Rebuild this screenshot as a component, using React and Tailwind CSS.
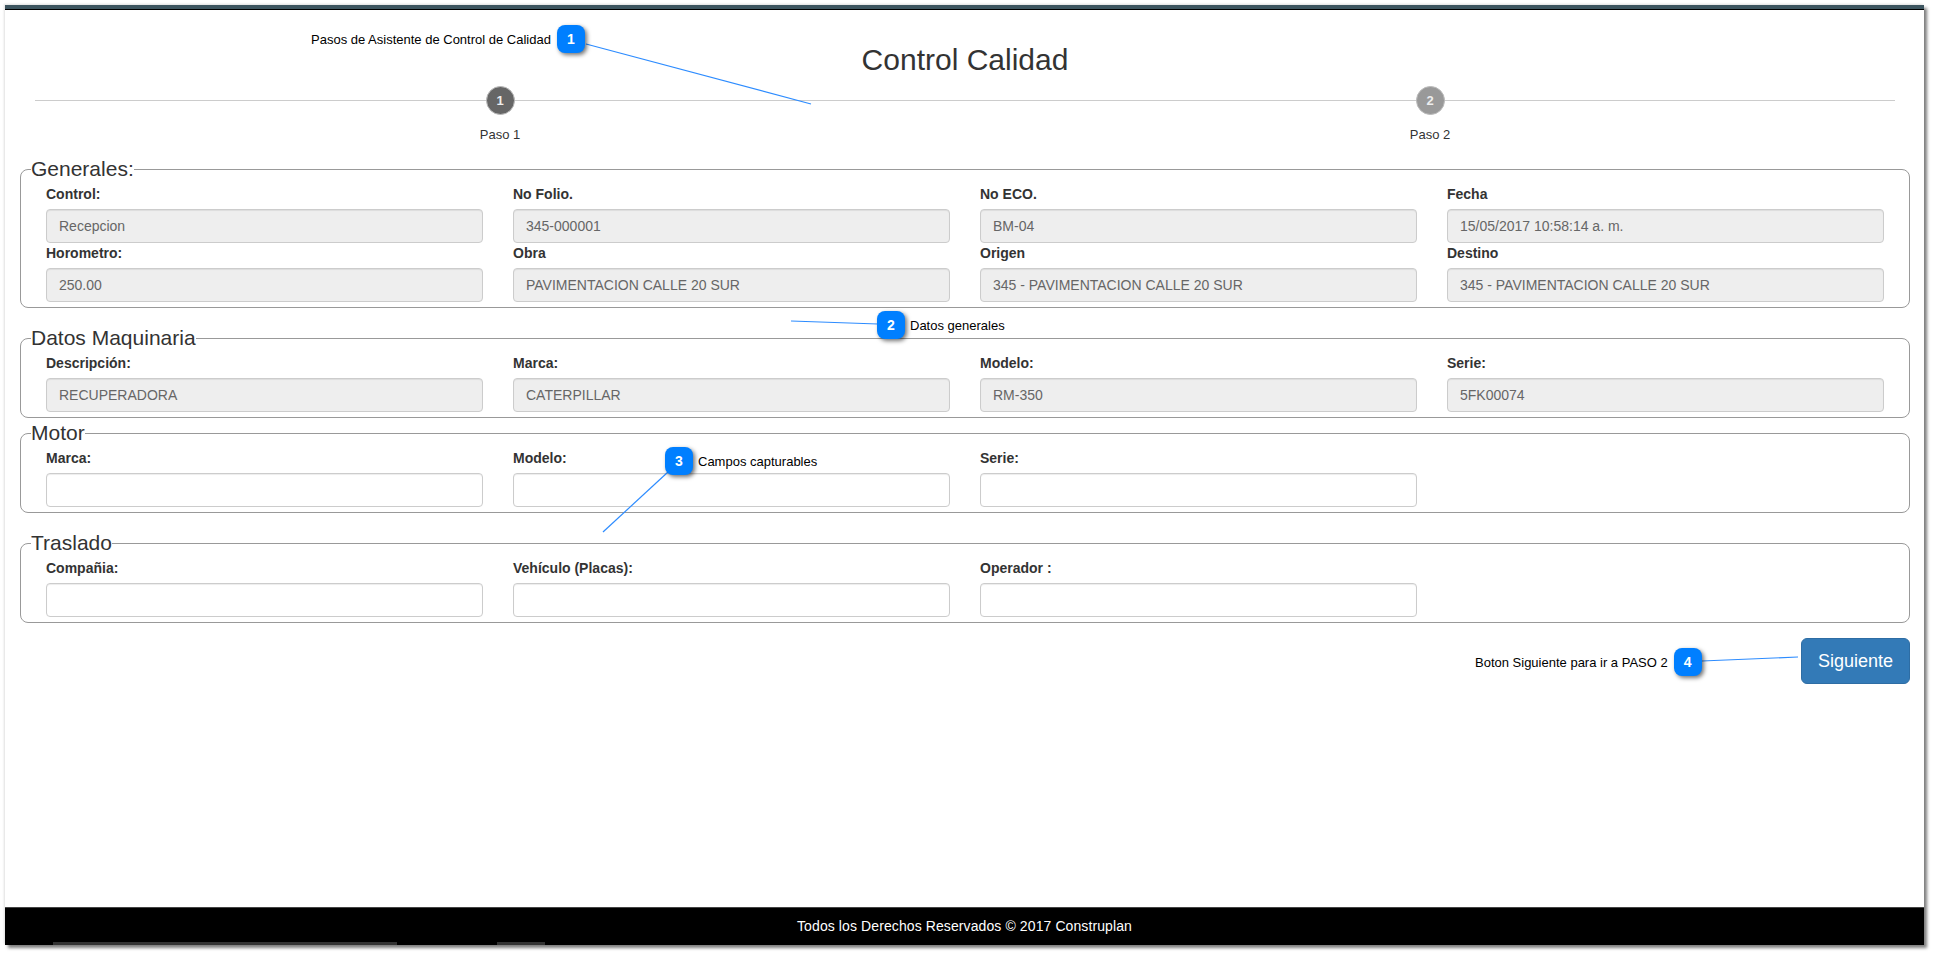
import React from "react";

const font = "font-['Liberation_Sans',Arial,sans-serif]";

// Datos de cada bloque del formulario
const sections = [
  {
    title: "Generales:",
    fields: [
      { label: "Control:", value: "Recepcion" },
      { label: "No Folio.", value: "345-000001" },
      { label: "No ECO.", value: "BM-04" },
      { label: "Fecha", value: "15/05/2017 10:58:14 a. m." },
      { label: "Horometro:", value: "250.00" },
      { label: "Obra", value: "PAVIMENTACION CALLE 20 SUR" },
      { label: "Origen", value: "345 - PAVIMENTACION CALLE 20 SUR" },
      { label: "Destino", value: "345 - PAVIMENTACION CALLE 20 SUR" },
    ],
  },
  {
    title: "Datos Maquinaria",
    className: "mt-[15px]",
    fields: [
      { label: "Descripción:", value: "RECUPERADORA" },
      { label: "Marca:", value: "CATERPILLAR" },
      { label: "Modelo:", value: "RM-350" },
      { label: "Serie:", value: "5FK00074" },
    ],
  },
  {
    title: "Motor",
    fields: [{ label: "Marca:" }, { label: "Modelo:" }, { label: "Serie:" }],
  },
  {
    title: "Traslado",
    className: "mt-[15px]",
    fields: [{ label: "Compañia:" }, { label: "Vehículo (Placas):" }, { label: "Operador :" }],
  },
];

function Field({ label, value }) {
  return (
    <div className="px-[15px]">
      <label className="block h-5 mb-[5px] text-[14px] leading-5 font-bold text-[#333]">{label}</label>
      {value ? (
        <div className="h-[34px] px-3 rounded border border-[#ccc] bg-[#eee] text-[14px] leading-[32px] text-[#666] shadow-[inset_0_1px_1px_rgba(0,0,0,0.075)]">
          {value}
        </div>
      ) : (
        <input
          type="text"
          className="block w-full h-[34px] px-3 rounded border border-[#ccc] bg-white text-[14px] text-[#555] shadow-[inset_0_1px_1px_rgba(0,0,0,0.075)]"
        />
      )}
    </div>
  );
}

function Section({ title, fields, className = "" }) {
  return (
    <fieldset className={`border border-[#999] rounded-lg px-[10px] pb-[5px] ${className}`}>
      <legend className="text-[21px] leading-[30px] text-[#333]">{title}</legend>
      <div className="grid grid-cols-4">
        {fields.map((f, i) => (
          <Field key={i} {...f} />
        ))}
      </div>
    </fieldset>
  );
}

function Step({ n, label, active }) {
  return (
    <div className="flex flex-col items-center">
      <div
        className={`relative w-[29px] h-[29px] rounded-full border border-[#bbb] flex items-center justify-center text-[13px] font-bold text-[#eee] ${
          active ? "bg-[#666]" : "bg-[#999]"
        }`}
      >
        {n}
      </div>
      <div className="mt-[11px] text-[13px] leading-[17px] text-[#333]">{label}</div>
    </div>
  );
}

// Anotacion azul: numero y texto en una sola fila
function Callout({ n, text, textFirst, className }) {
  const note = <span className="pt-[2px] text-[13px] leading-4 text-black whitespace-nowrap">{text}</span>;
  return (
    <div className={`absolute flex items-center ${textFirst ? "gap-[6px]" : "gap-[5px]"} ${className}`}>
      {textFirst && note}
      <div className="w-7 h-7 rounded-lg bg-[#007fff] text-white text-[14px] font-bold flex items-center justify-center shadow-[2px_2px_4px_rgba(0,0,0,0.55)]">
        {n}
      </div>
      {!textFirst && note}
    </div>
  );
}

export default function App() {
  return (
    <div className={`relative w-[1933px] h-[954px] overflow-hidden bg-white pl-[5px] pt-[5px] ${font}`}>
      <div className="w-[1919px] h-[940px] flex flex-col bg-white shadow-[3px_3px_3px_rgba(0,0,0,0.5),-1px_-1px_2px_rgba(0,0,0,0.12)]">
        <div className="h-[5px] shrink-0 bg-[#3d5560] border-b border-black" />

        <main className="flex-1 pl-[15px] pr-[14px]">
          <h1 className="mt-[33px] text-center text-[30px] leading-[33px] text-[#333]">Control Calidad</h1>

          <div className="relative mt-[10px] ml-[15px] mr-[15px] grid grid-cols-2">
            <div className="absolute left-0 right-0 top-[14px] h-px bg-[#ccc]" />
            <Step n={1} label="Paso 1" active />
            <Step n={2} label="Paso 2" />
          </div>

          <div className="mt-[11px]">
            {sections.map((s) => (
              <Section key={s.title} {...s} />
            ))}
          </div>

          <div className="flex justify-end mt-[15px]">
            <button className="w-[109px] h-[46px] rounded-md bg-[#337ab7] border border-[#2e6da4] text-white text-[18px]">
              Siguiente
            </button>
          </div>
        </main>

        <footer className="relative h-[38px] shrink-0 bg-black border-t border-[#444] text-center text-white text-[14px] tracking-[0.1px] leading-[37px]">
          Todos los Derechos Reservados © 2017 Construplan
          <div className="absolute left-[48px] bottom-0 w-[344px] h-[3px] bg-[#333]" />
          <div className="absolute left-[492px] bottom-0 w-[48px] h-[3px] bg-[#333]" />
        </footer>
      </div>

      {/* Capa de anotaciones sobre la captura */}
      <svg className="absolute inset-0 pointer-events-none" width="1933" height="954">
        <g stroke="#2d8cff" strokeWidth="1.2" fill="none">
          <path d="M586 44 L811 104" />
          <path d="M878 324 L791 321" />
          <path d="M668 472 L603 532" />
          <path d="M1702 661 L1798 657" />
        </g>
      </svg>

      <Callout n={1} text="Pasos de Asistente de Control de Calidad" textFirst className="left-[311px] top-[25px]" />
      <Callout n={2} text="Datos generales" className="left-[877px] top-[311px]" />
      <Callout n={3} text="Campos capturables" className="left-[665px] top-[447px]" />
      <Callout n={4} text="Boton Siguiente para ir a PASO 2" textFirst className="left-[1475px] top-[648px]" />
    </div>
  );
}
